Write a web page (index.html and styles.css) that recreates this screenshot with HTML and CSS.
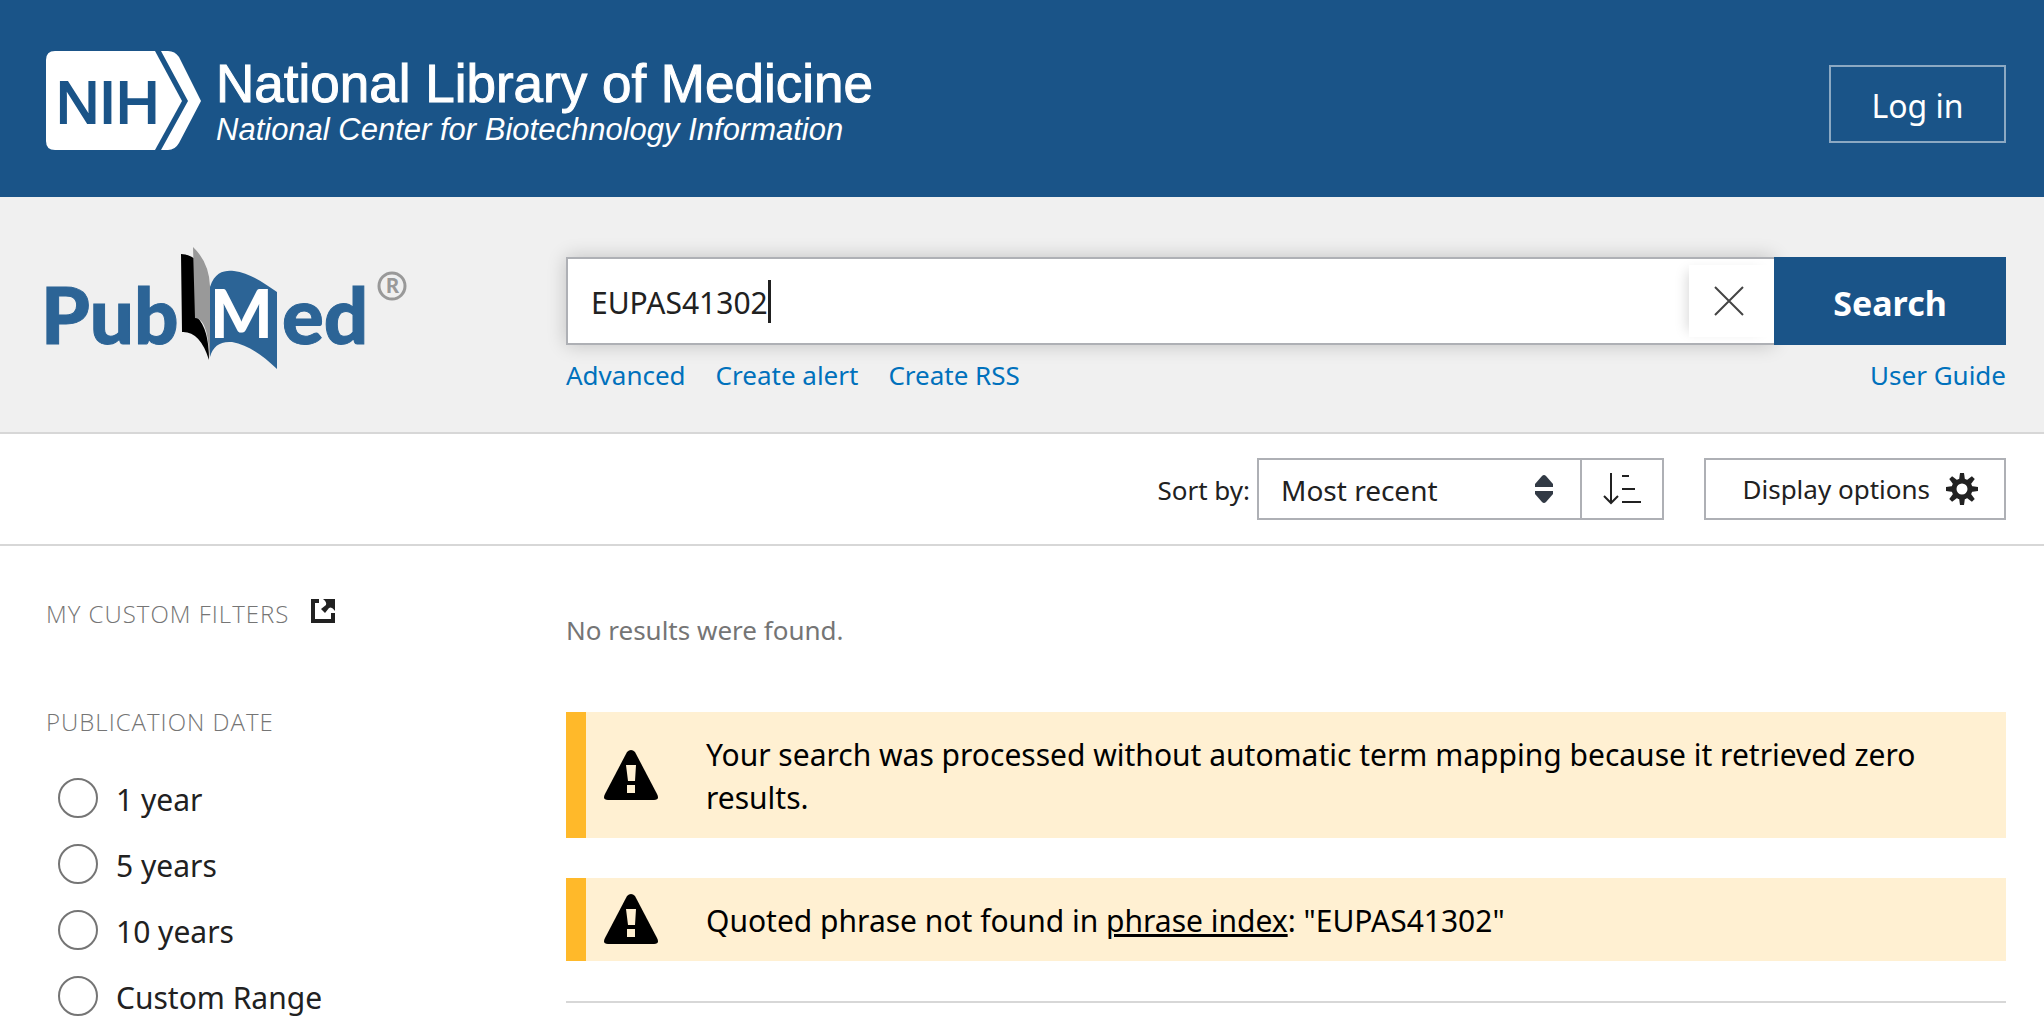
FILE: index.html
```html
<!DOCTYPE html>
<html lang="en">
<head>
  <meta charset="UTF-8">
  <meta name="viewport" content="width=device-width, initial-scale=1.0">
  <title>EUPAS41302 - Search Results - PubMed</title>
  <link rel="stylesheet" href="styles.css">
</head>
<body>
  <!-- NCBI header -->
  <header class="ncbi-header">
    <a class="ncbi-logo" href="#">
      <svg class="nih-mark" viewBox="0 0 156 100" aria-hidden="true">
        <path fill="#fff" d="M9 0H109L136 50L109 99H9Q0 99 0 90V9Q0 0 9 0Z"/>
        <path fill="#fff" d="M115 0H122Q129 0 133 6L155 50L133 92Q129 99 122 99H115L142 50Z"/>
        <text class="nih-text" x="10" y="72">NIH</text>
      </svg>
      <span class="ncbi-name">
        <span class="ncbi-title">National Library of Medicine</span>
        <span class="ncbi-subtitle">National Center for Biotechnology Information</span>
      </span>
    </a>
    <button type="button" class="login-btn">Log in</button>
  </header>

  <!-- Search -->
  <section class="search-section">
    <a class="pubmed-logo" href="#">
      <svg class="pubmed-mark" viewBox="-10 0 372 124" width="372" height="124" role="img" aria-label="PubMed">
        <path fill="#000" d="M135 7Q142 7 149 12L151 70Q163 82 163 113Q154 84 136 85Z"/>
        <path fill="#999" d="M147 0Q163 15 164 39V112C162 86 159 72 149 71Z"/>
        <path fill="#2c6496" d="M164 40C169 24 180 23 188 24C204 26 218 36 231 45V122C216 108 202 98 186 95C174 94 167 99 164 110Z"/>
        <text class="logo-word" x="-5" y="97">Pub</text>
        <text class="logo-m" x="164" y="91">M</text>
        <text class="logo-word" x="236" y="97">ed</text>
        <circle cx="346" cy="39" r="13" fill="none" stroke="#999" stroke-width="3"/>
        <text class="logo-r" x="340" y="46">R</text>
      </svg>
    </a>
    <form class="search-form">
      <div class="search-row">
        <div class="search-field">
          <input type="text" id="term" class="search-input" value="EUPAS41302" aria-label="Search PubMed" autocomplete="off" spellcheck="false">
          <span class="caret"></span>
          <button type="button" class="clear-btn" aria-label="Clear search input">
            <svg viewBox="0 0 30 30" width="30" height="30"><path d="M1 1L29 29M29 1L1 29" stroke="#444" stroke-width="2"/></svg>
          </button>
        </div>
        <button type="submit" class="search-btn">Search</button>
      </div>
      <nav class="search-links">
        <a href="#">Advanced</a>
        <a href="#">Create alert</a>
        <a href="#">Create RSS</a>
        <a href="#" class="user-guide">User Guide</a>
      </nav>
    </form>
  </section>

  <!-- Sort and display options -->
  <section class="toolbar">
    <label for="sort" class="sort-label">Sort by:</label>
    <div class="sort-group">
      <div class="select-wrap">
        <select id="sort" class="sort-select">
          <option>Most recent</option>
        </select>
        <svg class="select-arrows" viewBox="0 0 20 28" width="20" height="28" aria-hidden="true">
          <path fill="#323a45" d="M8 1Q10-1 12 1L19 9V12H1V9ZM1 16H19V19L12 27Q10 29 8 27L1 19Z"/>
        </svg>
      </div>
      <button type="button" class="order-btn" aria-label="Sort order">
        <svg viewBox="0 0 38 32" width="38" height="32" fill="none" stroke="#212121" stroke-width="2">
          <path d="M8 0V30M1 23L8 30L15 23M19 3H26M19 16H32M19 29H38"/>
        </svg>
      </button>
    </div>
    <button type="button" class="display-btn">Display options
      <svg viewBox="0 0 32 32" width="32" height="32" aria-hidden="true">
        <circle cx="16" cy="16" r="8" fill="none" stroke="#212121" stroke-width="5"/>
        <g fill="#212121">
          <path id="tooth" d="M14 0H18L19 7H13Z"/>
          <use href="#tooth" transform="rotate(45 16 16)"/>
          <use href="#tooth" transform="rotate(90 16 16)"/>
          <use href="#tooth" transform="rotate(135 16 16)"/>
          <use href="#tooth" transform="rotate(180 16 16)"/>
          <use href="#tooth" transform="rotate(225 16 16)"/>
          <use href="#tooth" transform="rotate(270 16 16)"/>
          <use href="#tooth" transform="rotate(315 16 16)"/>
        </g>
      </svg>
    </button>
  </section>

  <div class="content">
    <!-- Filters -->
    <aside class="filters">
      <h3 class="filter-title">My custom filters
        <a href="#" class="filter-link" aria-label="Open my custom filters">
          <svg viewBox="0 0 24 24" width="24" height="24" fill="#212121">
            <path d="M0 0H8V4H4V20H20V14H24V24H0Z"/>
            <path d="M12 0H24V12Q21 7 18 9L14 14L10 10L15 6Q16 3 12 0Z"/>
          </svg>
        </a>
      </h3>
      <h3 class="filter-title">Publication date</h3>
      <ul class="filter-list">
        <li><input type="radio" name="date" id="y1"><label for="y1">1 year</label></li>
        <li><input type="radio" name="date" id="y5"><label for="y5">5 years</label></li>
        <li><input type="radio" name="date" id="y10"><label for="y10">10 years</label></li>
        <li><input type="radio" name="date" id="custom"><label for="custom">Custom Range</label></li>
      </ul>
    </aside>

    <!-- Results -->
    <main class="results">
      <p class="no-results">No results were found.</p>
      <div class="alert">
        <svg viewBox="0 0 54 50" width="54" height="50" aria-hidden="true">
          <path d="M23 2Q27-2 31 2L53 44Q56 50 50 50H4Q-2 50 1 44Z"/>
          <path fill="#fff0d2" d="M22 15H32L31 31H24ZM23 35H31V43H23Z"/>
        </svg>
        <p>Your search was processed without automatic term mapping because it retrieved zero results.</p>
      </div>
      <div class="alert">
        <svg viewBox="0 0 54 50" width="54" height="50" aria-hidden="true">
          <path d="M23 2Q27-2 31 2L53 44Q56 50 50 50H4Q-2 50 1 44Z"/>
          <path fill="#fff0d2" d="M22 15H32L31 31H24ZM23 35H31V43H23Z"/>
        </svg>
        <p>Quoted phrase not found in <a href="#">phrase index</a>: "EUPAS41302"</p>
      </div>
      <hr class="divider">
    </main>
  </div>
</body>
</html>
```
FILE: styles.css
```css
* {
  box-sizing: border-box;
}

body {
  margin: 0;
  background-color: #fff;
  color: #212121;
  font-family: "Segoe UI", "Noto Sans", "Open Sans", sans-serif;
  font-size: 26px;
}

button, input, select {
  font-family: inherit;
  color: inherit;
  margin: 0;
}

button {
  cursor: pointer;
}

svg {
  display: block;
  flex: none;
}

/* Header */
.ncbi-header {
  display: flex;
  justify-content: space-between;
  align-items: center;
  height: 197px;
  padding: 10px 38px 0 46px;
  background-color: #1a5488;
}

.ncbi-logo {
  display: flex;
  align-items: center;
  gap: 14px;
  margin-top: -6px;
  color: #fff;
  text-decoration: none;
  font-family: Helvetica, "Liberation Sans", Arial, sans-serif;
}

.nih-mark {
  width: 156px;
  height: 100px;
}

.nih-text {
  font-size: 60px;
  fill: #1a5488;
  stroke: #1a5488;
  stroke-width: 2;
}

.ncbi-name {
  display: flex;
  flex-direction: column;
  padding-top: 6px;
}

.ncbi-title {
  font-size: 53px;
  line-height: 52px;
  -webkit-text-stroke: 1px #fff;
}

.ncbi-subtitle {
  font-size: 31px;
  line-height: 40px;
  font-style: italic;
}

.login-btn {
  width: 177px;
  height: 78px;
  padding: 4px 0 0;
  border: 2px solid #8ca9c3;
  background: none;
  color: #fff;
  font-size: 32px;
}

/* Search */
.search-section {
  display: grid;
  grid-template-columns: 520px 1fr;
  height: 237px;
  padding: 50px 38px 0 46px;
  background-color: #f0f0f0;
  border-bottom: 2px solid #d7d7d7;
}

.pubmed-mark {
  margin-left: -10px;
}

.logo-word, .logo-m, .logo-r {
  font-family: Lato, sans-serif;
  font-weight: 900;
}

.logo-word {
  font-size: 78px;
  fill: #2c6496;
  stroke: #2c6496;
  stroke-width: 1;
}

.logo-m {
  font-size: 66px;
  fill: #fff;
}

.logo-r {
  font-size: 20px;
  fill: #999;
}

.search-form {
  padding-top: 10px;
}

.search-row {
  display: flex;
  height: 88px;
}

.search-field {
  position: relative;
  display: flex;
  flex: 1;
  align-items: center;
  border: 2px solid #aeb0b5;
  border-right: none;
  background-color: #fff;
  box-shadow: 0 0 18px rgba(0, 0, 0, 0.2);
}

.search-input {
  flex: 1;
  height: 100%;
  padding: 3px 0 0 23px;
  border: none;
  outline: none;
  background: none;
  font-size: 30px;
}

.caret {
  position: absolute;
  left: 200px;
  top: 21px;
  width: 3px;
  height: 43px;
  background-color: #212121;
}

.clear-btn {
  display: flex;
  align-items: center;
  justify-content: center;
  width: 85px;
  height: 72px;
  padding: 0 6px 0 0;
  border: none;
  background-color: #fff;
  box-shadow: -8px 0 12px -6px rgba(0, 0, 0, 0.15);
}

.search-btn {
  position: relative;
  width: 232px;
  padding: 4px 0 0;
  border: none;
  background-color: #1a5488;
  color: #fff;
  font-size: 34px;
  font-weight: bold;
}

.search-links {
  display: flex;
  gap: 30px;
  padding-top: 10px;
  line-height: 40px;
}

.search-links a {
  color: #0071bc;
  text-decoration: none;
}

.search-links .user-guide {
  margin-left: auto;
}

/* Toolbar */
.toolbar {
  display: flex;
  justify-content: flex-end;
  align-items: center;
  height: 112px;
  padding: 0 38px;
  border-bottom: 2px solid #d7d7d7;
}

.sort-label {
  padding-top: 2px;
  margin-right: 7px;
}

.sort-group {
  display: flex;
  height: 62px;
  margin-right: 40px;
  border: 2px solid #aeb0b5;
}

.select-wrap {
  position: relative;
  width: 323px;
  border-right: 2px solid #aeb0b5;
}

.sort-select {
  width: 100%;
  height: 100%;
  padding: 2px 22px 0;
  border: none;
  background: none;
  appearance: none;
  font-size: 28px;
}

.select-arrows {
  position: absolute;
  right: 26px;
  top: 15px;
  pointer-events: none;
}

.order-btn {
  display: flex;
  align-items: center;
  justify-content: center;
  width: 80px;
  padding: 0;
  border: none;
  background: none;
}

.display-btn {
  display: flex;
  align-items: center;
  justify-content: flex-end;
  gap: 16px;
  width: 302px;
  height: 62px;
  padding: 0 26px 0 0;
  border: 2px solid #aeb0b5;
  background: none;
  font-size: 26px;
}

/* Content */
.content {
  display: grid;
  grid-template-columns: 520px 1fr;
  padding: 0 38px 0 46px;
}

.filters {
  padding-top: 48px;
}

.filter-title {
  display: flex;
  align-items: center;
  gap: 22px;
  margin: 0 0 68px;
  color: #757575;
  font-family: "Segoe UI", "Open Sans", sans-serif;
  font-size: 24px;
  font-weight: 300;
  line-height: 40px;
  letter-spacing: 1px;
  text-transform: uppercase;
}

.filter-link {
  padding-bottom: 6px;
}

.filter-list {
  margin: -44px 0 0;
  padding: 0;
  list-style: none;
  font-size: 30px;
  line-height: 40px;
}

.filter-list li {
  display: flex;
  align-items: flex-start;
  gap: 18px;
  padding: 12px 0 12px 12px;
}

.filter-list li:last-child {
  padding-bottom: 0;
}

.filter-list label {
  padding-top: 2px;
}

.filter-list input {
  appearance: none;
  width: 40px;
  height: 40px;
  margin: 0;
  border: 2px solid #757575;
  border-radius: 50%;
}

.filter-list input:checked {
  border-width: 12px;
}

.results {
  padding-top: 64px;
}

.no-results {
  margin: 0 0 62px;
  color: #757575;
  line-height: 40px;
}

.alert {
  display: flex;
  align-items: center;
  gap: 48px;
  margin-bottom: 40px;
  padding: 21px 18px 19px;
  border-left: 20px solid #ffb92a;
  background-color: #fff0d2;
  color: #000;
  font-size: 30px;
  line-height: 43px;
}

.alert svg {
  margin: -12px 0 -9px;
}

.alert p {
  margin: 0;
}

.alert a {
  color: #000;
}

.divider {
  margin: 0;
  border: none;
  border-top: 2px solid #d7d7d7;
}
```
